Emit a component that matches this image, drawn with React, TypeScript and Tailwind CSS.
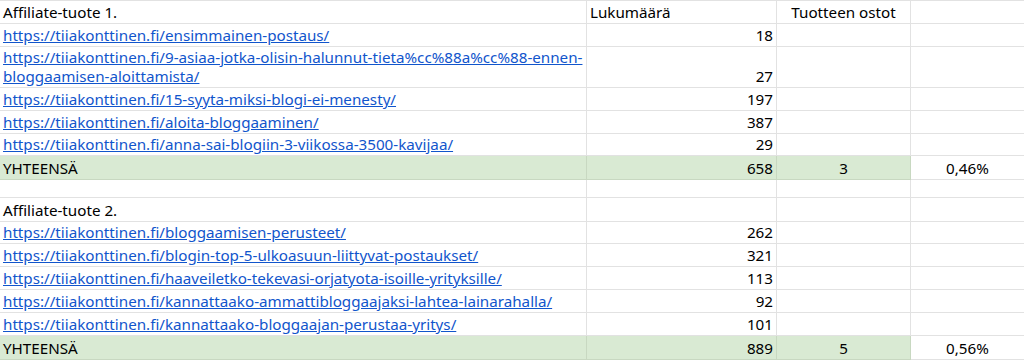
import React from 'react'

type RowData = {
  label: string
  link?: boolean
  count?: string
  buys?: string
  pct?: string
  h: string
  green?: boolean
  header?: boolean
  second?: string
}

const rows: RowData[] = [
  { label: 'Affiliate-tuote 1.', header: true, h: 'h-[23px]' },
  { label: 'https://tiiakonttinen.fi/ensimmainen-postaus/', link: true, count: '18', h: 'h-[23px]' },
  {
    label: 'https://tiiakonttinen.fi/9-asiaa-jotka-olisin-halunnut-tieta%cc%88a%cc%88-ennen-',
    second: 'bloggaamisen-aloittamista/',
    link: true,
    count: '27',
    h: 'h-[41px]',
  },
  { label: 'https://tiiakonttinen.fi/15-syyta-miksi-blogi-ei-menesty/', link: true, count: '197', h: 'h-[23px]' },
  { label: 'https://tiiakonttinen.fi/aloita-bloggaaminen/', link: true, count: '387', h: 'h-[23px]' },
  { label: 'https://tiiakonttinen.fi/anna-sai-blogiin-3-viikossa-3500-kavijaa/', link: true, count: '29', h: 'h-[22px]' },
  { label: 'YHTEENSÄ', count: '658', buys: '3', pct: '0,46%', green: true, h: 'h-[24px]' },
  { label: '', h: 'h-[18px]' },
  { label: 'Affiliate-tuote 2.', h: 'h-[24px]' },
  { label: 'https://tiiakonttinen.fi/bloggaamisen-perusteet/', link: true, count: '262', h: 'h-[22px]' },
  { label: 'https://tiiakonttinen.fi/blogin-top-5-ulkoasuun-liittyvat-postaukset/', link: true, count: '321', h: 'h-[23px]' },
  { label: 'https://tiiakonttinen.fi/haaveiletko-tekevasi-orjatyota-isoille-yrityksille/', link: true, count: '113', h: 'h-[23px]' },
  { label: 'https://tiiakonttinen.fi/kannattaako-ammattibloggaajaksi-lahtea-lainarahalla/', link: true, count: '92', h: 'h-[23px]' },
  { label: 'https://tiiakonttinen.fi/kannattaako-bloggaajan-perustaa-yritys/', link: true, count: '101', h: 'h-[23px]' },
  { label: 'YHTEENSÄ', count: '889', buys: '5', pct: '0,56%', green: true, h: 'h-[24px]' },
]

function Row({ row }: { row: RowData }) {
  const cell = row.green
    ? 'bg-[#d9ead3] border-[#c8d8c1]'
    : 'border-[#e2e2e2]'

  return (
    <div className={`flex ${row.h}`}>
      <div className={`w-[587px] shrink-0 border-r border-b ${cell} flex items-end px-[3px] pb-[1px]`}>
        {row.link
          ? (
              <a href="#" className="text-[#1155cc] underline leading-[19px] whitespace-nowrap">
                {row.label}
                {row.second && (
                  <>
                    <br />
                    {row.second}
                  </>
                )}
              </a>
            )
          : (
              <span className="text-black leading-[19px]">{row.label}</span>
            )}
      </div>
      <div className={`w-[190px] shrink-0 border-r border-b ${cell} flex items-end justify-end px-[3px] pb-[1px]`}>
        {row.header
          ? <span className="mr-auto leading-[19px]">Lukumäärä</span>
          : <span className="leading-[19px]">{row.count}</span>}
      </div>
      <div className={`w-[134px] shrink-0 border-r border-b ${cell} flex items-end justify-center pb-[1px]`}>
        <span className="leading-[19px]">{row.header ? 'Tuotteen ostot' : row.buys}</span>
      </div>
      <div className="flex-1 border-b border-[#e2e2e2] bg-white flex items-end justify-center pb-[1px]">
        <span className="leading-[19px]">{row.pct}</span>
      </div>
    </div>
  )
}

export default function App() {
  return (
    <div className="w-[1024px] h-[360px] overflow-hidden bg-white border-t border-[#e2e2e2] font-['Noto_Sans',sans-serif] text-[15.2px] text-black">
      {rows.map((row, i) => (
        <Row key={i} row={row} />
      ))}
    </div>
  )
}
